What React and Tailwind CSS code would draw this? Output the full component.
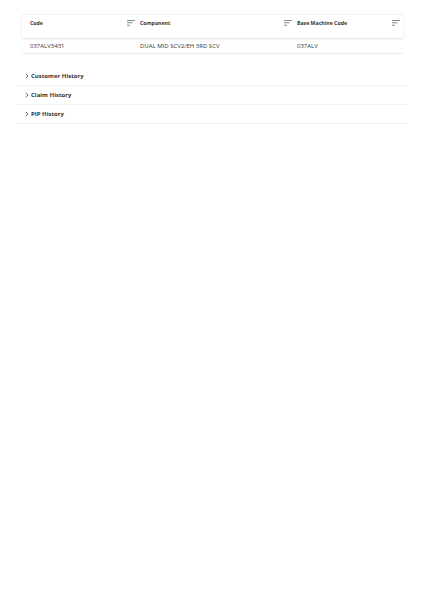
const SortIcon = () => (
  <svg width="8" height="6" viewBox="0 0 8 6" className="mt-[1px] shrink-0">
    <rect x="0" y="0" width="8" height="0.8" fill="#6b6b6b" />
    <rect x="0" y="2.4" width="5.5" height="0.8" fill="#6b6b6b" />
    <rect x="0" y="4.8" width="3" height="0.8" fill="#6b6b6b" />
  </svg>
);

const Chevron = () => (
  <svg width="4" height="6" viewBox="0 0 4 6" className="shrink-0">
    <path d="M0.8 0.8 L3 3 L0.8 5.2" fill="none" stroke="#444" strokeWidth="0.8" />
  </svg>
);

const columns = [
  { label: "Code", width: "w-[114px]", pad: "pl-[8px] pr-[1px]" },
  { label: "Component", width: "w-[156px]", pad: "pl-[4px]" },
  { label: "Base Machine Code", width: "flex-1", pad: "pl-[5px] pr-[3px]" },
];

const row = ["037ALV3431", "DUAL MID SCV2/EH 3RD SCV", "037ALV"];

const sections = ["Customer History", "Claim History", "PIP History"];

export default function App() {
  return (
    <div
      className="min-h-[600px] w-[424px] bg-white text-[#333]"
      style={{ fontFamily: '"Open Sans", sans-serif' }}
    >
      <div className="pt-[14px] pl-[22px] pr-[21px]">
        <div className="flex h-[24px] border-t border-[#f2f2f2] shadow-[0_1px_2px_rgba(0,0,0,0.12)]">
          {columns.map((c) => (
            <div
              key={c.label}
              className={`${c.width} ${c.pad} flex items-start justify-between pt-[4px]`}
            >
              <span className="text-[5.2px] font-bold leading-[8px]">{c.label}</span>
              <SortIcon />
            </div>
          ))}
        </div>
        <div className="mt-[1px] flex h-[15px] border-b border-[#ececec]">
          {row.map((v, i) => (
            <div key={v} className={`${columns[i].width} ${columns[i].pad} flex items-center`}>
              <span className="text-[6px]">{v}</span>
            </div>
          ))}
        </div>
      </div>

      <div className="mt-[13px] pl-[16px] pr-[16px]">
        {sections.map((s) => (
          <div
            key={s}
            className="flex h-[19px] items-center gap-[2px] border-b border-[#f3f3f3] pl-[9px]"
          >
            <Chevron />
            <span className="text-[6px] font-bold">{s}</span>
          </div>
        ))}
      </div>
    </div>
  );
}
